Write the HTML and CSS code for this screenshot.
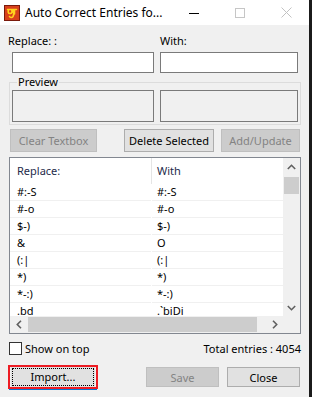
FILE: index.html
```html
<!DOCTYPE html>
<html>
  <head>
    <meta charset="utf-8">
    <title>Auto Correct Entries</title>
    <link rel="stylesheet" href="styles.css">
  </head>

  <body>
    <div class="window">
      <header class="titlebar">
        <svg class="titlebar__icon" width="16" height="16" viewBox="0 0 16 16">
          <rect x="0.5" y="0.5" width="15" height="15" fill="#d8401c" stroke="#7a1a0c"/>
          <path d="M3.5 4.5 H12.5 M5 4.5 C3.5 6 4 9 6.5 8.5 C8 8.2 8.5 6 7.5 5 M8.5 4.5 C9.5 7 10.5 9 9 11.5 C8 13 6 12.5 5.5 11.5 M10.5 4.5 V9"
            fill="none" stroke="#ffd21e" stroke-width="1.6" stroke-linecap="round"/>
        </svg>
        <span class="titlebar__text">Auto Correct Entries fo...</span>
        <div class="titlebar__controls">
          <span class="caption-button">
            <svg width="10" height="10" viewBox="0 0 10 10"><path d="M0 5.5 H10" stroke="#000" stroke-width="1"/></svg>
          </span>
          <span class="caption-button">
            <svg width="10" height="10" viewBox="0 0 10 10"><rect x="0.5" y="0.5" width="9" height="9" fill="none" stroke="#c6c6c6"/></svg>
          </span>
          <span class="caption-button">
            <svg width="11" height="11" viewBox="0 0 11 11"><path d="M0.5 0.5 L10.5 10.5 M10.5 0.5 L0.5 10.5" stroke="#c2c2c2" stroke-width="1"/></svg>
          </span>
        </div>
      </header>

      <main class="content">
        <div class="fields">
          <label class="field__label" for="replace">Replace: :</label>
          <label class="field__label" for="with">With:</label>
          <input id="replace" class="textbox textbox--left" type="text">
          <input id="with" class="textbox textbox--right" type="text">
        </div>

        <fieldset class="preview">
          <legend class="preview__legend">Preview</legend>
          <div class="preview__box preview__box--left"></div>
          <div class="preview__box preview__box--right"></div>
        </fieldset>

        <div class="actions">
          <button class="button button--clear" disabled>Clear Textbox</button>
          <button class="button button--delete">Delete Selected</button>
          <button class="button button--add" disabled>Add/Update</button>
        </div>

        <div class="list">
          <div class="list__view">
            <div class="list__header">
              <div class="list__cell">Replace:</div>
              <div class="list__cell">With</div>
            </div>
            <div class="list__row"><div class="list__cell">#:-S</div><div class="list__cell">#:-S</div></div>
            <div class="list__row"><div class="list__cell">#-o</div><div class="list__cell">#-o</div></div>
            <div class="list__row"><div class="list__cell">$-)</div><div class="list__cell">$-)</div></div>
            <div class="list__row"><div class="list__cell">&amp;</div><div class="list__cell">O</div></div>
            <div class="list__row"><div class="list__cell">(:|</div><div class="list__cell">(:|</div></div>
            <div class="list__row"><div class="list__cell">*)</div><div class="list__cell">*)</div></div>
            <div class="list__row"><div class="list__cell">*-:)</div><div class="list__cell">*-:)</div></div>
            <div class="list__row"><div class="list__cell">.bd</div><div class="list__cell">.`biDi</div></div>
          </div>

          <div class="vscroll">
            <span class="scroll-arrow">
              <svg width="9" height="6" viewBox="0 0 9 6"><path d="M0.8 5 L4.5 1.3 L8.2 5" fill="none" stroke="#606060" stroke-width="1.6"/></svg>
            </span>
            <span class="vscroll__thumb"></span>
            <span class="vscroll__track"></span>
            <span class="scroll-arrow">
              <svg width="9" height="6" viewBox="0 0 9 6"><path d="M0.8 1 L4.5 4.7 L8.2 1" fill="none" stroke="#606060" stroke-width="1.6"/></svg>
            </span>
          </div>

          <div class="hscroll">
            <span class="scroll-arrow">
              <svg width="6" height="9" viewBox="0 0 6 9"><path d="M5 0.8 L1.3 4.5 L5 8.2" fill="none" stroke="#606060" stroke-width="1.6"/></svg>
            </span>
            <span class="hscroll__thumb"></span>
            <span class="scroll-arrow">
              <svg width="6" height="9" viewBox="0 0 6 9"><path d="M1 0.8 L4.7 4.5 L1 8.2" fill="none" stroke="#606060" stroke-width="1.6"/></svg>
            </span>
          </div>

          <div class="list__corner"></div>
        </div>

        <div class="status">
          <label class="checkbox">
            <span class="checkbox__box"></span>
            Show on top
          </label>
          <span class="status__total">Total entries : 4054</span>
        </div>

        <div class="footer">
          <div class="highlight">
            <button class="button button--import"><span class="button__focus">Import...</span></button>
          </div>
          <button class="button button--save" disabled>Save</button>
          <button class="button button--close">Close</button>
        </div>
      </main>
    </div>
  </body>
</html>
```

FILE: styles.css
```css
:root {
  --window: #f0f0f0;
  --white: #ffffff;
  --black: #000000;
  --input-border: #7a7a7a;
  --group-border: #dcdcdc;
  --button: #e1e1e1;
  --button-border: #adadad;
  --disabled: #cccccc;
  --disabled-border: #bfbfbf;
  --disabled-text: #838383;
  --list-border: #828790;
  --row-line: #f0f0f0;
  --thumb: #cdcdcd;
  --red: #ed1c24;
  --blue: #0078d7;
}

body {
  margin: 0;
  background-color: #1b1b1b;
  font-family: 'Noto Sans', sans-serif;
  font-size: 11px;
  color: var(--black);
}

.window {
  width: 309px;
  height: 397px;
  background-color: var(--window);
  overflow: hidden;
}

.titlebar {
  height: 25px;
  display: flex;
  align-items: center;
  background-color: var(--white);
  font-size: 12px;
}

.titlebar__icon {
  margin-left: 4px;
  flex: none;
}

.titlebar__text {
  margin-left: 5px;
  white-space: nowrap;
}

.titlebar__controls {
  margin-left: auto;
  display: flex;
}

.caption-button {
  width: 46px;
  height: 25px;
  display: flex;
  align-items: center;
  justify-content: center;
}

.content {
  padding: 0 8px;
  border-left: 1px solid #3a3a3a;
  margin-left: -1px;
}

/* replace / with */

.fields {
  display: grid;
  grid-template-columns: 146px 141px;
  column-gap: 6px;
  row-gap: 3px;
  padding-top: 8px;
}

.field__label {
  height: 16px;
  line-height: 16px;
}

.textbox {
  box-sizing: border-box;
  height: 21px;
  margin: 0;
  border: 1px solid var(--input-border);
  background-color: var(--white);
  font: inherit;
}

.textbox--left {
  margin-left: 4px;
  width: 142px;
}

.textbox--right {
  width: 138px;
}

/* preview */

.preview {
  margin: 2px 0 0 1px;
  width: 292px;
  box-sizing: border-box;
  padding: 1px 2px 0 2px;
  border: 1px solid var(--group-border);
  display: flex;
  gap: 6px;
  height: 50px;
}

.preview__legend {
  padding: 0 1px;
  margin-left: 5px;
  line-height: 14px;
}

.preview__box {
  box-sizing: border-box;
  height: 32px;
  border: 1px solid var(--input-border);
}

.preview__box--left {
  width: 142px;
}

.preview__box--right {
  width: 138px;
}

/* buttons */

.button {
  box-sizing: border-box;
  margin: 0;
  padding: 0;
  font: inherit;
  color: var(--black);
  background-color: var(--button);
  border: 1px solid var(--button-border);
}

.button[disabled] {
  background-color: var(--disabled);
  border-color: var(--disabled-border);
  color: var(--disabled-text);
}

.actions {
  display: flex;
  margin-top: 4px;
  height: 23px;
}

.actions .button {
  height: 23px;
}

.button--clear {
  margin-left: 2px;
  width: 87px;
}

.button--delete {
  margin-left: 27px;
  width: 90px;
}

.button--add {
  margin-left: 7px;
  width: 79px;
}

/* list */

.list {
  margin: 5px 0 0 1px;
  width: 292px;
  height: 177px;
  box-sizing: border-box;
  border: 1px solid var(--list-border);
  display: grid;
  grid-template-columns: 273px 17px;
  grid-template-rows: 158px 17px;
  background-color: var(--white);
}

.list__view {
  overflow: hidden;
}

.list__header,
.list__row {
  display: grid;
  grid-template-columns: 141px 132px;
  column-gap: 1px;
}

.list__header {
  height: 26px;
  line-height: 26px;
  color: #1e2a4a;
}

.list__header .list__cell:first-child {
  border-right: 1px solid #e5e5e5;
  margin-right: -1px;
}

.list__row .list__cell {
  height: 17px;
  line-height: 16px;
  box-sizing: border-box;
  border-bottom: 1px solid var(--row-line);
}

.list__cell {
  padding-left: 7px;
  white-space: nowrap;
}

.list__header .list__cell:last-child,
.list__row .list__cell:last-child {
  padding-left: 5px;
}

.vscroll {
  display: flex;
  flex-direction: column;
  align-items: center;
  background-color: var(--window);
}

.scroll-arrow {
  width: 17px;
  height: 17px;
  flex: none;
  display: flex;
  align-items: center;
  justify-content: center;
}

.vscroll__thumb {
  width: 15px;
  height: 17px;
  margin-top: 2px;
  background-color: var(--thumb);
}

.vscroll__track {
  flex: 1;
}

.hscroll {
  display: flex;
  align-items: center;
  background-color: var(--window);
}

.hscroll__thumb {
  height: 15px;
  width: 229px;
  margin-left: 1px;
  margin-right: auto;
  background-color: var(--thumb);
}

.list__corner {
  background-color: var(--window);
}

/* status */

.status {
  margin-top: 6px;
  height: 16px;
  display: flex;
  align-items: center;
  justify-content: space-between;
}

.checkbox {
  display: flex;
  align-items: center;
  gap: 3px;
  margin-left: 1px;
}

.checkbox__box {
  box-sizing: border-box;
  width: 13px;
  height: 13px;
  border: 1px solid #333333;
  background-color: var(--white);
}

/* footer */

.footer {
  margin-top: 9px;
  display: flex;
  align-items: flex-start;
}

.highlight {
  box-sizing: border-box;
  width: 90px;
  border: 2px solid var(--red);
  padding: 0 1px;
  box-shadow: 0 2px 0 -1px var(--blue);
}

.button--import {
  width: 100%;
  height: 20px;
  border: none;
  display: flex;
  align-items: center;
  justify-content: center;
}

.button__focus {
  flex: 1;
  margin: 0 1px;
  height: 16px;
  line-height: 16px;
  border: 1px dotted #000000;
}

.button--save,
.button--close {
  margin-top: 2px;
  width: 73px;
  height: 20px;
}

.button--save {
  margin-left: 48px;
}

.button--close {
  margin-left: 8px;
}
```
